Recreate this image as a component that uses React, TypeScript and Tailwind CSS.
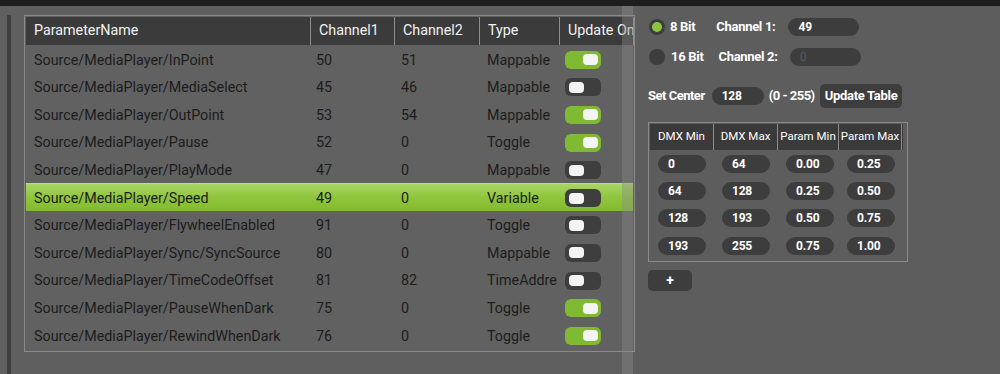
import React from 'react';

const rows = [
  { name: 'Source/MediaPlayer/InPoint', ch1: '50', ch2: '51', type: 'Mappable', on: true },
  { name: 'Source/MediaPlayer/MediaSelect', ch1: '45', ch2: '46', type: 'Mappable', on: false },
  { name: 'Source/MediaPlayer/OutPoint', ch1: '53', ch2: '54', type: 'Mappable', on: true },
  { name: 'Source/MediaPlayer/Pause', ch1: '52', ch2: '0', type: 'Toggle', on: true },
  { name: 'Source/MediaPlayer/PlayMode', ch1: '47', ch2: '0', type: 'Mappable', on: false },
  { name: 'Source/MediaPlayer/Speed', ch1: '49', ch2: '0', type: 'Variable', on: false, selected: true },
  { name: 'Source/MediaPlayer/FlywheelEnabled', ch1: '91', ch2: '0', type: 'Toggle', on: false },
  { name: 'Source/MediaPlayer/Sync/SyncSource', ch1: '80', ch2: '0', type: 'Mappable', on: false },
  { name: 'Source/MediaPlayer/TimeCodeOffset', ch1: '81', ch2: '82', type: 'TimeAddre', on: false },
  { name: 'Source/MediaPlayer/PauseWhenDark', ch1: '75', ch2: '0', type: 'Toggle', on: true },
  { name: 'Source/MediaPlayer/RewindWhenDark', ch1: '76', ch2: '0', type: 'Toggle', on: true },
];

const dmxRows = [
  ['0', '64', '0.00', '0.25'],
  ['64', '128', '0.25', '0.50'],
  ['128', '193', '0.50', '0.75'],
  ['193', '255', '0.75', '1.00'],
];

const cols = 'grid grid-cols-[285px_84px_85px_80px_74px]';

function Toggle({ on }: { on: boolean }) {
  return (
    <div
      className={
        on
          ? 'w-[36px] h-[18px] rounded-[6px] bg-[#80b932] flex items-center justify-end pr-[3px]'
          : 'w-[36px] h-[18px] rounded-[6px] bg-[#3e3e3e] flex items-center justify-start pl-[4px]'
      }
    >
      <div className="w-[15px] h-[11px] rounded-[4px] bg-[#f4f4f4]" />
    </div>
  );
}

function Pill({ value, className }: { value: string; className?: string }) {
  return (
    <div className={'h-[18px] rounded-full bg-[#3d3d3d] flex items-center pl-[10px] text-[12px] font-bold tracking-[-0.2px] text-white ' + (className ?? '')}>
      {value}
    </div>
  );
}

export default function App() {
  return (
    <div className="w-[1000px] h-[374px] overflow-hidden bg-[#5f5f5f] font-['Roboto',sans-serif]">
      <div className="h-[6px] bg-[#1d1d1d]" />
      <div className="flex h-[368px] relative">
        {/* left gutter */}
        <div className="w-[24px] flex pl-[7px]">
          <div className="w-[4px] mt-[9px] bg-[#3f3f3f]" />
        </div>

        {/* parameter table */}
        <div className="w-[611px] mt-[9px]">
          <div className="border-[1.5px] border-[#8a8a8a] p-px h-[337px] bg-[#616161]">
            <div className={cols + ' h-[28px] bg-[#3b3b3b] text-[14.3px] text-[#f2f2f2]'}>
              {['ParameterName', 'Channel1', 'Channel2', 'Type', 'Update On'].map((h) => (
                <div key={h} className="flex items-center pl-[8px] border-r border-[#8d8d8d] overflow-hidden whitespace-nowrap">
                  {h}
                </div>
              ))}
            </div>
            {rows.map((r) => (
              <div
                key={r.name}
                className={
                  cols +
                  ' h-[27.6px] text-[14.3px] text-[#1c1c1c] ' +
                  (r.selected ? 'bg-gradient-to-b from-[#a9d565] via-[#8fc53c] to-[#84bb2d] border-t border-[#b9dd86]' : '')
                }
              >
                <div className="flex items-center pt-[3px] pl-[8px] whitespace-nowrap">{r.name}</div>
                <div className="flex items-center pt-[3px] pl-[5px]">{r.ch1}</div>
                <div className="flex items-center pt-[3px] pl-[6px]">{r.ch2}</div>
                <div className="flex items-center pt-[3px] pl-[7px] overflow-hidden whitespace-nowrap">{r.type}</div>
                <div className="flex items-center pt-[2px] pl-[5px]">
                  <Toggle on={r.on} />
                </div>
              </div>
            ))}
          </div>
        </div>

        {/* scroll strip over the table edge */}
        <div className="absolute left-[622px] top-0 w-[11px] h-full bg-[#8a8a8a]/40" />

        {/* right panel */}
        <div className="flex-1 ml-[1px] pl-[12px] pt-[11px] bg-[#5d5d5d] text-white">
          <div className="flex items-center h-[20px] text-[13px] font-bold tracking-[-0.3px]">
            <div className="w-[16px] h-[16px] rounded-full bg-[#3d3d3d] flex items-center justify-center ml-[1px]">
              <div className="w-[10px] h-[10px] rounded-full bg-[#8cc63f]" />
            </div>
            <span className="ml-[5px]">8 Bit</span>
            <span className="ml-[21px]">Channel 1:</span>
            <Pill value="49" className="ml-[13px] w-[71px]" />
          </div>
          <div className="flex items-center h-[20px] mt-[10px] text-[13px] font-bold tracking-[-0.3px]">
            <div className="w-[16px] h-[16px] rounded-full bg-[#3d3d3d] ml-[1px]" />
            <span className="ml-[6px]">16 Bit</span>
            <span className="ml-[15px]">Channel 2:</span>
            <Pill value="0" className="ml-[12px] w-[71px] !text-[#595959] !font-normal" />
          </div>
          <div className="flex items-center h-[24px] mt-[17px] text-[13px] font-bold tracking-[-0.5px]">
            <span>Set Center</span>
            <Pill value="128" className="ml-[7px] w-[52px]" />
            <span className="ml-[5px]">(0 - 255)</span>
            <div className="ml-[5px] h-[24px] px-[5px] rounded-[5px] bg-[#3d3d3d] flex items-center tracking-[-0.3px]">
              Update Table
            </div>
          </div>

          <div className="mt-[14px] w-[260px] border-[1.5px] border-[#8a8a8a] p-px">
            <div className="grid grid-cols-[64px_64px_61px_63px] h-[26px] bg-[#3a3a3a] text-[11.5px] w-[253px]">
              {['DMX Min', 'DMX Max', 'Param Min', 'Param Max'].map((h) => (
                <div key={h} className="flex items-center justify-center border-r border-[#8d8d8d] whitespace-nowrap">
                  {h}
                </div>
              ))}
            </div>
            {dmxRows.map((r, i) => (
              <div key={i} className="grid grid-cols-[64px_64px_61px_63px] h-[27.3px] items-center">
                {r.map((v, j) => (
                  <div key={j} className="pl-[8px]">
                    <Pill value={v} className="w-[48px]" />
                  </div>
                ))}
              </div>
            ))}
            <div className="h-[1px]" />
          </div>

          <div className="mt-[8px] w-[44px] h-[21px] rounded-[5px] bg-[#3d3d3d] flex items-center justify-center text-[14px] font-bold">
            +
          </div>
        </div>
      </div>
    </div>
  );
}
